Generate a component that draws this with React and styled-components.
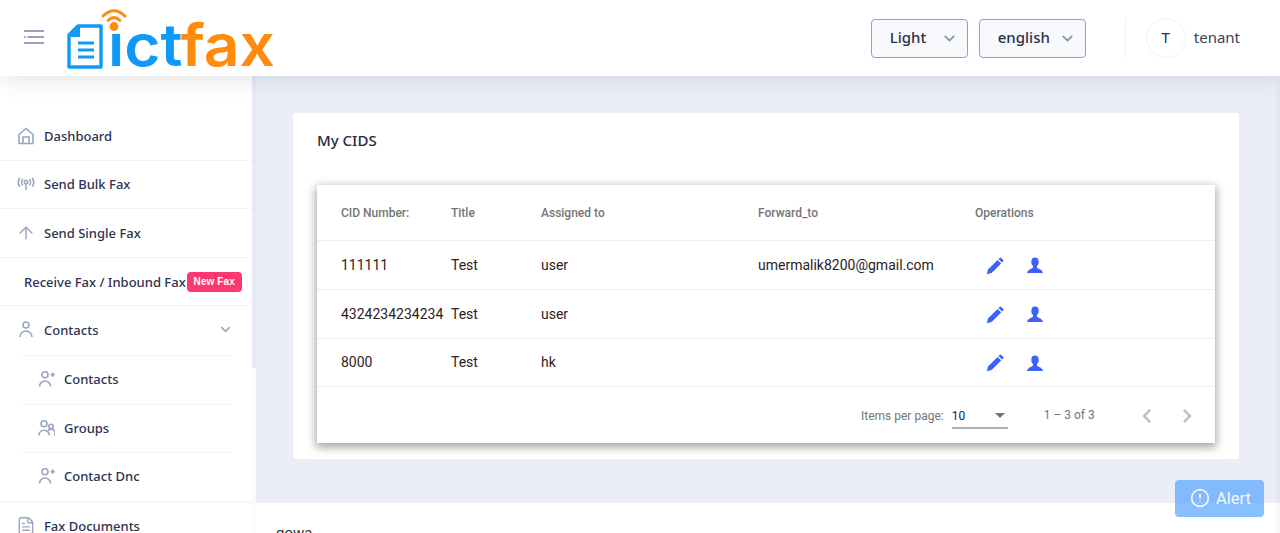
import React from 'react';
import styled, { createGlobalStyle } from 'styled-components';
import { ArrowUp, ChevronDown, CircleAlert, FileText } from 'lucide-react';
import { MdChevronLeft, MdChevronRight } from 'react-icons/md';

const GlobalStyle = createGlobalStyle`
  html, body {
    margin: 0;
    height: 533px;
    overflow: hidden;
    background: #ebeef7;
    font-family: "Noto Sans", "Open Sans", sans-serif;
  }
  * { box-sizing: border-box; }
`;

const rows = [
  { cid: '111111', title: 'Test', assigned: 'user', forward: 'umermalik8200@gmail.com' },
  { cid: '4324234234234', title: 'Test', assigned: 'user', forward: '' },
  { cid: '8000', title: 'Test', assigned: 'hk', forward: '' }
];

const Logo = () => (
  <LogoMark width="212" height="72" viewBox="0 0 212 72">
    <text x="44" y="63.5" fontFamily="Inter, sans-serif" fontWeight="600" fontSize="58" textLength="167" lengthAdjust="spacingAndGlyphs">
      <tspan fill="#1199f7">ict</tspan>
      <tspan fill="#ff8a0c">fax</tspan>
    </text>
    <circle cx="50" cy="23" r="7.5" fill="#fff" />
    <path d="M39 14 Q50 3.5 61 14" fill="none" stroke="#ff8a0c" strokeWidth="3" strokeLinecap="round" />
    <path d="M44 18.5 Q50 12.5 56 18.5" fill="none" stroke="#ff8a0c" strokeWidth="2.8" strokeLinecap="round" />
    <circle cx="50" cy="24.5" r="4.4" fill="#ff8a0c" />
    <path d="M14 24 H37 V65 H5 V33 Z" fill="none" stroke="#1199f7" strokeWidth="3.4" strokeLinejoin="round" />
    <path d="M15 25 V34 H6" fill="#1199f7" stroke="#1199f7" strokeWidth="2" />
    <path d="M14 41 H30 M14 48 H30 M14 55 H30" stroke="#1199f7" strokeWidth="3.2" />
  </LogoMark>
);

const MenuGlyph = () => (
  <svg width="22" height="16" viewBox="0 0 22 16">
    <path d="M1 2 H21 M4.5 8 H21 M1 14 H21 M1 8 H2.6" stroke="#97a0b8" strokeWidth="2" />
  </svg>
);

const HomeIcon = () => (
  <Line width="18" height="18" viewBox="0 0 18 18">
    <path d="M2 16.5 V7.5 L9 1.5 L16 7.5 V16.5 Z M6 16.5 V10 H12 V16.5" />
  </Line>
);

const TowerIcon = () => (
  <Line width="20" height="14" viewBox="0 0 20 14">
    <circle cx="10" cy="5" r="1.7" />
    <path d="M10 7 V13 M6.8 2 a4.5 4.5 0 0 0 0 6.4 M13.2 2 a4.5 4.5 0 0 1 0 6.4 M3.8 0.8 a8 8 0 0 0 0 9 M16.2 0.8 a8 8 0 0 1 0 9" />
  </Line>
);

const PersonIcon = () => (
  <Line width="14" height="17" viewBox="0 0 14 17">
    <circle cx="7" cy="4" r="3" />
    <path d="M1 16 a6 6 0 0 1 12 0" />
  </Line>
);

const PersonPlusIcon = () => (
  <Line width="17" height="16" viewBox="0 0 17 16">
    <circle cx="7" cy="3.8" r="3" />
    <path d="M1.5 15.5 a5.5 5.5 0 0 1 11 0 M12.6 3.6 h4.2 M14.7 1.5 v4.2" />
  </Line>
);

const GroupIcon = () => (
  <Line width="17" height="16" viewBox="0 0 17 16">
    <circle cx="6" cy="3.8" r="3" />
    <circle cx="13" cy="6.5" r="2.2" />
    <path d="M0.8 15.5 a5.3 5.3 0 0 1 10.6 0 M10 10.8 a3.8 3.8 0 0 1 6.4 4.7" />
  </Line>
);

const PencilIcon = () => (
  <svg width="18" height="18" viewBox="0 0 18 18" fill="currentColor">
    <path d="M0.8 17.2 L2 12.4 L11.6 2.9 L15.1 6.4 L5.6 16 Z" />
    <path d="M12.5 2 L13.8 0.8 Q14.4 0.3 15 0.8 L17.2 3 Q17.7 3.6 17.2 4.2 L16 5.5 Z" />
  </svg>
);

const BustIcon = () => (
  <svg width="16" height="17" viewBox="0 0 16 16" fill="currentColor">
    <ellipse cx="8" cy="4.4" rx="3.7" ry="4.4" />
    <path d="M6 7.5 H10 V10 C10 11 15.5 11.6 16 15.5 H0 C0.5 11.6 6 11 6 10 Z" />
  </svg>
);

export default function App() {
  return (
    <>
      <GlobalStyle />
      <Page>
        <Header>
          <MenuButton><MenuGlyph /></MenuButton>
          <Logo />
          <HeaderRight>
            <SelectBox $width={97}>
              <SelectLabel>Light</SelectLabel>
              <ChevronDown size={17} color="#8b93a8" strokeWidth={2.4} />
            </SelectBox>
            <SelectBox $width={107}>
              <SelectLabel>english</SelectLabel>
              <ChevronDown size={17} color="#8b93a8" strokeWidth={2.4} />
            </SelectBox>
            <Divider />
            <Avatar>T</Avatar>
            <UserName>tenant</UserName>
          </HeaderRight>
        </Header>

        <Body>
          <Sidebar>
            <ScrollThumb />
            <NavItem><NavIcon><HomeIcon /></NavIcon>Dashboard</NavItem>
            <NavItem><NavIcon><TowerIcon /></NavIcon>Send Bulk Fax</NavItem>
            <NavItem><NavIcon><ArrowUp size={20} strokeWidth={1.8} /></NavIcon>Send Single Fax</NavItem>
            <NavItem $plain>Receive Fax / Inbound Fax<Badge>New Fax</Badge></NavItem>
            <ParentItem>
              <NavIcon><PersonIcon /></NavIcon>Contacts
              <Caret><ChevronDown size={15} strokeWidth={2.4} /></Caret>
            </ParentItem>
            <SubItem><SubIcon><PersonPlusIcon /></SubIcon>Contacts</SubItem>
            <SubItem><SubIcon><GroupIcon /></SubIcon>Groups</SubItem>
            <SubItem><SubIcon><PersonPlusIcon /></SubIcon>Contact Dnc</SubItem>
            <NavItem $topLine><NavIcon><FileText size={20} strokeWidth={1.7} /></NavIcon>Fax Documents</NavItem>
          </Sidebar>

          <Main>
            <Content>
              <Card>
                <CardTitle>My CIDS</CardTitle>
                <TableWrap>
                  <Table>
                    <thead>
                      <tr>
                        <Th $w={134}>CID Number:</Th>
                        <ThPlain $w={90}>Title</ThPlain>
                        <ThPlain $w={217}>Assigned to</ThPlain>
                        <ThPlain $w={217}>Forward_to</ThPlain>
                        <ThPlain>Operations</ThPlain>
                      </tr>
                    </thead>
                    <tbody>
                      {rows.map((row) => (
                        <tr key={row.cid}>
                          <Td>{row.cid}</Td>
                          <TdPlain>{row.title}</TdPlain>
                          <TdPlain>{row.assigned}</TdPlain>
                          <TdPlain>{row.forward}</TdPlain>
                          <TdPlain>
                            <Actions>
                              <PencilIcon />
                              <BustIcon />
                            </Actions>
                          </TdPlain>
                        </tr>
                      ))}
                    </tbody>
                  </Table>
                  <Pager>
                    <PagerLabel>Items per page:</PagerLabel>
                    <PageSize>10<Arrow /></PageSize>
                    <PagerRange>1 – 3 of 3</PagerRange>
                    <PagerButtons>
                      <MdChevronLeft size={28} />
                      <MdChevronRight size={28} />
                    </PagerButtons>
                  </Pager>
                </TableWrap>
              </Card>
            </Content>
            <Footer>gowa</Footer>
          </Main>
        </Body>

        <PageScrollbar />
        <AlertButton><CircleAlert size={20} />Alert</AlertButton>
      </Page>
    </>
  );
}

const Page = styled.div`
  position: relative;
  width: 1280px;
  height: 533px;
  overflow: hidden;
`;

const Header = styled.header`
  position: relative;
  z-index: 2;
  display: flex;
  align-items: center;
  height: 76px;
  padding-left: 23px;
  background: #fff;
  box-shadow: 0 2px 20px rgba(60, 70, 100, 0.16);
`;

const LogoMark = styled.svg`
  display: block;
  overflow: visible;
`;

const MenuButton = styled.div`
  display: flex;
  width: 41px;
  margin-top: -2px;
`;

const HeaderRight = styled.div`
  display: flex;
  align-items: center;
  margin-left: auto;
  padding-right: 40px;
`;

const SelectBox = styled.div`
  display: flex;
  align-items: center;
  justify-content: space-between;
  width: ${(props) => props.$width}px;
  height: 39px;
  margin-right: 11px;
  padding: 0 9px 0 18px;
  border: 1px solid #7d9ff8;
  border-radius: 4px;
  background: #f7f9fd;
`;

const SelectLabel = styled.span`
  padding-bottom: 2px;
  font-size: 15px;
  font-weight: 500;
  color: #28304a;
`;

const Divider = styled.div`
  width: 1px;
  height: 40px;
  margin: 0 20px 0 28px;
  background: #f1f2f6;
`;

const Avatar = styled.div`
  display: flex;
  align-items: center;
  justify-content: center;
  width: 40px;
  height: 40px;
  margin-right: 8px;
  padding-bottom: 2px;
  border: 1px solid #f0f1f5;
  border-radius: 50%;
  font-size: 15px;
  color: #28304a;
`;

const UserName = styled.span`
  padding-bottom: 2px;
  font-size: 15px;
  color: #3a4156;
`;

const Body = styled.div`
  display: flex;
  height: 457px;
`;

const Sidebar = styled.nav`
  position: relative;
  flex: none;
  width: 256px;
  padding-top: 36px;
  border-right: 4px solid #f9fafc;
  background: #fff;
`;

const ScrollThumb = styled.div`
  position: absolute;
  top: 0;
  right: -4px;
  width: 4px;
  height: 292px;
  background: #e6e9f3;
`;

const PageScrollbar = styled.div`
  position: absolute;
  top: 76px;
  right: 0;
  bottom: 0;
  width: 4px;
  background: rgba(120, 130, 160, 0.05);
`;

const NavItem = styled.div`
  display: flex;
  align-items: center;
  height: 48.6px;
  padding-left: ${(props) => (props.$plain ? '24px' : '16px')};
  border-top: ${(props) => (props.$topLine ? '2px solid #f5f6fa' : '0')};
  border-bottom: 1px solid #f3f4f8;
  font-size: 13px;
  font-weight: 500;
  color: #2c3350;
`;

const ParentItem = styled(NavItem)`
  padding-bottom: 2px;
  border-bottom: 0;
`;

const NavIcon = styled.span`
  display: flex;
  justify-content: center;
  width: 20px;
  margin-right: 8px;
  color: #9aa5bf;
`;

const Line = styled.svg`
  display: block;
  fill: none;
  stroke: currentColor;
  stroke-width: 1.6;
`;

const Caret = styled.span`
  display: flex;
  margin-left: auto;
  margin-right: 19px;
  color: #9aa5bf;
`;

const SubItem = styled.div`
  display: flex;
  align-items: center;
  width: 212px;
  height: 48.6px;
  margin-left: 20px;
  padding-left: 18px;
  padding-bottom: 1.5px;
  border-top: 1px solid #f3f4f8;
  font-size: 13px;
  font-weight: 500;
  color: #2c3350;
`;

const SubIcon = styled.span`
  display: flex;
  width: 26px;
  color: #9aa5bf;
`;

const Badge = styled.span`
  flex: none;
  width: 55px;
  height: 20px;
  margin-left: 1px;
  border-radius: 4px;
  background: #fb386f;
  color: #fff;
  font-family: "Liberation Sans", sans-serif;
  font-size: 10px;
  font-weight: 700;
  line-height: 20px;
  letter-spacing: 0.1px;
  text-align: center;
`;

const Main = styled.main`
  display: flex;
  flex: 1;
  flex-direction: column;
  min-width: 0;
`;

const Content = styled.div`
  flex: none;
  height: 427px;
  padding: 37px 41px 0 37px;
`;

const Card = styled.section`
  height: 346px;
  padding: 0 24px;
  border-radius: 3px;
  background: #fff;
`;

const CardTitle = styled.h2`
  height: 72px;
  margin: 0;
  padding-top: 16px;
  font-size: 15px;
  font-weight: 500;
  line-height: 22px;
  color: #252b42;
`;

const TableWrap = styled.div`
  height: 258px;
  background: #fff;
  box-shadow: 0 3px 9px 1px rgba(0, 0, 0, 0.38);
`;

const Table = styled.table`
  width: 100%;
  border-collapse: collapse;
  table-layout: fixed;
  font-family: Roboto, sans-serif;

  tbody tr:last-child td {
    height: 48px;
  }
`;

const Th = styled.th`
  width: ${(props) => (props.$w ? `${props.$w}px` : 'auto')};
  height: 55px;
  padding: 1px 0 0 24px;
  border-bottom: 1px solid #eeeeee;
  text-align: left;
  font-size: 12px;
  font-weight: 500;
  color: #757575;
`;

const ThPlain = styled(Th)`
  padding-left: 0;
`;

const Td = styled.td`
  height: 49px;
  padding: 0 0 0 24px;
  border-bottom: 1px solid #eeeeee;
  font-size: 14px;
  color: #2d2222;
`;

const TdPlain = styled(Td)`
  padding-left: 0;
`;

const Actions = styled.div`
  display: flex;
  align-items: center;
  gap: 23px;
  padding: 2px 0 0 11px;
  color: #3d62fb;

  svg { display: block; }
`;

const Pager = styled.div`
  display: flex;
  align-items: center;
  height: 59px;
  padding-left: 544px;
  font-family: Roboto, sans-serif;
  font-size: 12px;
  color: #757575;
`;

const PagerLabel = styled.span`
  margin-right: 8px;
`;

const PageSize = styled.div`
  display: flex;
  align-items: center;
  justify-content: space-between;
  width: 56px;
  height: 26px;
  padding: 1px 3px 0 0;
  border-bottom: 2px solid #b0b0b0;
  font-size: 12px;
  color: #222;
`;

const Arrow = styled.span`
  width: 0;
  height: 0;
  border-left: 5px solid transparent;
  border-right: 5px solid transparent;
  border-top: 5px solid #757575;
`;

const PagerRange = styled.span`
  margin-top: -3px;
  margin-left: 36px;
`;

const PagerButtons = styled.div`
  display: flex;
  gap: 12px;
  margin-left: 38px;
  color: #bdbdbd;
`;

const Footer = styled.footer`
  flex: 1;
  overflow: hidden;
  padding: 22px 0 0 20px;
  background: #fff;
  font-family: Roboto, sans-serif;
  font-size: 15px;
  line-height: 16px;
  color: #333;
`;

const AlertButton = styled.div`
  position: absolute;
  top: 480px;
  left: 1175px;
  display: flex;
  align-items: center;
  gap: 6px;
  width: 89px;
  height: 37px;
  padding: 0 0 1px 15px;
  border-radius: 4px;
  background: rgba(80, 160, 255, 0.68);
  color: #f2f8ff;
  font-family: Roboto, sans-serif;
  font-size: 16.5px;
`;
